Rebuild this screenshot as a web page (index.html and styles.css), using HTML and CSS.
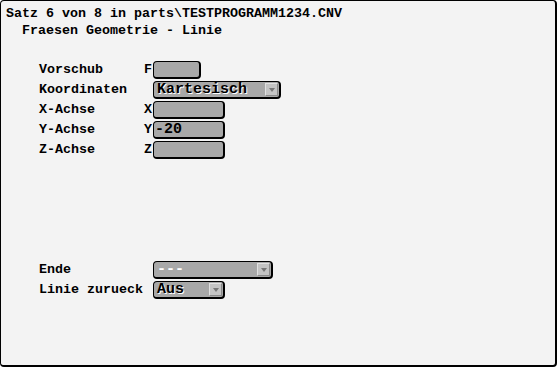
FILE: index.html
```html
<!DOCTYPE html>
<html lang="de">
<head>
    <meta charset="UTF-8"/>
    <title>Fraesen Geometrie - Linie</title>
    <link rel="stylesheet" href="styles.css">
</head>
<body>

<div class="fenster">
    <div class="titel">Satz 6 von 8 in parts\TESTPROGRAMM1234.CNV</div>
    <div class="untertitel">Fraesen Geometrie - Linie</div>

    <div class="formular">
        <div class="label">Vorschub</div>
        <div class="achse">F</div>
        <div class="feld breite-s"></div>

        <div class="label">Koordinaten</div>
        <div class="achse"></div>
        <div class="auswahl breite-l">
            <span class="wert">Kartesisch</span>
            <span class="pfeil"></span>
        </div>

        <div class="label">X-Achse</div>
        <div class="achse">X</div>
        <div class="feld breite-m"></div>

        <div class="label">Y-Achse</div>
        <div class="achse">Y</div>
        <div class="feld breite-m">-20</div>

        <div class="label">Z-Achse</div>
        <div class="achse">Z</div>
        <div class="feld breite-m"></div>

        <div class="luecke"></div>

        <div class="label">Ende</div>
        <div class="achse"></div>
        <div class="auswahl breite-e gesperrt">
            <span class="wert">---</span>
            <span class="pfeil"></span>
        </div>

        <div class="label">Linie zurueck</div>
        <div class="achse"></div>
        <div class="auswahl breite-m">
            <span class="wert">Aus</span>
            <span class="pfeil"></span>
        </div>
    </div>
</div>

</body>
</html>
```

FILE: styles.css
```css
* {
    margin: 0;
    padding: 0;
    box-sizing: border-box;
}

body {
    font-family: "Liberation Mono", "Courier New", monospace;
    font-size: 13.33px;
    font-weight: bold;
    color: #000;
    background: #fff;
}

/* Rahmen */
.fenster {
    width: 557px;
    height: 367px;
    background: #f3f3f3;
    border: 1px solid #000;
    border-right-width: 2px;
    border-bottom-width: 2px;
    border-radius: 4px;
    padding: 4px 0 0 5px;
}

.titel {
    line-height: 17px;
}

.untertitel {
    line-height: 17px;
    padding-left: 16px;
}

.formular {
    display: grid;
    grid-template-columns: 105px 9px auto;
    grid-auto-rows: 20px;
    align-items: center;
    justify-items: start;
    margin-top: 21px;
    padding-left: 33px;
}

.label {
    line-height: 16px;
}

.achse {
    line-height: 16px;
}

/* leere Zeilen zwischen Z-Achse und Ende */
.luecke {
    grid-column: 1 / -1;
    grid-row: span 5;
}

/* Eingabefelder */
.feld,
.auswahl {
    height: 18px;
    background: #a8a8a8;
    border: 1px solid #000;
    border-right-width: 2px;
    border-bottom-width: 2px;
    border-radius: 4px;
    font-size: 15px;
    line-height: 15px;
    padding-left: 1px;
}

.breite-s { width: 48px; }
.breite-m { width: 72px; }
.breite-l { width: 128px; }
.breite-e { width: 120px; }

.auswahl {
    display: flex;
    align-items: center;
    justify-content: space-between;
    padding-right: 1px;
}

.auswahl .wert {
    padding-left: 2px;
    text-shadow: 1px 1px 0 #fff;
}

.auswahl.gesperrt .wert {
    color: #fff;
    text-shadow: none;
}

.pfeil {
    width: 13px;
    height: 13px;
    background: #c4c4c4;
    border-top: 1px solid #e0e0e0;
    border-left: 1px solid #e0e0e0;
    border-right: 1px solid #8a8a8a;
    border-bottom: 1px solid #8a8a8a;
    position: relative;
}

/* kleiner Pfeil im Knopf */
.pfeil::after {
    content: "";
    position: absolute;
    left: 3px;
    top: 4px;
    border-left: 3px solid transparent;
    border-right: 3px solid transparent;
    border-top: 4px solid #777;
}
```
